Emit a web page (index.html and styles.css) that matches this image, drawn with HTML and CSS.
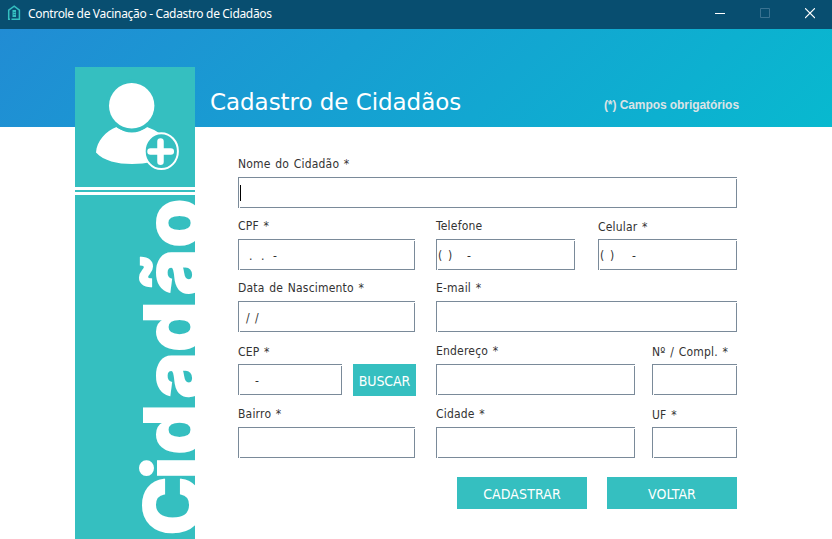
FILE: index.html
```html
<!DOCTYPE html>
<html lang="pt-BR">
<head>
<meta charset="utf-8">
<title>Controle de Vacinação - Cadastro de Cidadãos</title>
<link rel="stylesheet" href="styles.css">
</head>
<body>
<div class="window">
  <header class="titlebar">
    <svg class="app-icon" width="14" height="16" viewBox="0 0 14 16"><path d="M3 14.250H1.700V5.200L7.200 1.200l5.200 4v9.050H4.500" fill="none" stroke="#35bfc0" stroke-width="1.500"/><path d="M5.500 5h3.500v7H5.500z" fill="#35bfc0"/><path d="M6.500 7.500h2M6.500 9.500h2" stroke="#084e70" stroke-width=".6"/></svg>
    <span class="window-title">Controle de Vacinação - Cadastro de Cidadãos</span>
    <div class="controls">
      <svg width="10" height="11" viewBox="0 0 10 11"><path d="M0 5.500h10" stroke="#fff"/></svg>
      <svg width="10" height="11" viewBox="0 0 10 11"><path d="M.5.500h9v9h-9z" fill="none" stroke="#3a7291"/></svg>
      <svg width="10" height="11" viewBox="0 0 10 11"><path d="M0 .2l10 9.800M10 .2L0 10" stroke="#fff" stroke-width="1.200"/></svg>
    </div>
  </header>
  <div class="content">
    <aside class="side">
      <svg class="user" width="120" height="120" viewBox="0 0 120 120">
        <path d="M41.500 60C31 64 21.500 74 21 85.500C29 94 42 97 57 97S83 94 92 86L84 66Q78 62 72 60Q57 71 41.500 60Z" fill="#fff"/>
        <circle cx="56.700" cy="38.700" r="26.300" fill="#35bfc0"/>
        <circle cx="56.700" cy="38.700" r="22.700" fill="#fff"/>
        <ellipse cx="86.300" cy="84.200" rx="16.600" ry="17.900" fill="#35bfc0" stroke="#fff" stroke-width="2"/>
        <path d="M75.500 84.500h20.300M85.500 74.500v20.300" stroke="#fff" stroke-width="6.500" stroke-linecap="round"/>
      </svg>
      <div class="stripe"></div>
      <svg class="side-name" width="120" height="344" viewBox="0 0 120 344"><text class="vertical" transform="translate(126.300 341.600) rotate(-90)" x="1 57.300 82 138 184.800 241.400 289">Cidadão</text></svg>
    </aside>
    <main class="main">
      <div class="banner"><h1>Cadastro de Cidadãos</h1><span class="required">(*) Campos obrigatórios</span></div>
      <form class="form">
        <div class="row"><div class="group w-full"><label>Nome do Cidadão *</label><div class="field"><i class="caret"></i></div></div></div>
        <div class="row">
          <div class="group w-left"><label>CPF *</label><div class="field cpf"><span>.</span><span>.</span><span>-</span></div></div>
          <div class="group w-phone"><label>Telefone</label><div class="field phone"><span>(</span><span>)</span><span>-</span></div></div>
          <div class="group w-phone cell"><label class="low">Celular *</label><div class="field phone"><span>(</span><span>)</span><span>-</span></div></div>
        </div>
        <div class="row">
          <div class="group w-left"><label>Data de Nascimento *</label><div class="field date"><span>/</span><span>/</span></div></div>
          <div class="group w-mail"><label>E-mail *</label><div class="field"></div></div>
        </div>
        <div class="row spaced">
          <div class="group w-cep"><label class="low">CEP *</label><div class="field cep"><span>-</span></div></div>
          <button type="button" class="search">BUSCAR</button>
          <div class="group w-addr"><label>Endereço *</label><div class="field"></div></div>
          <div class="group w-small"><label class="low">Nº / Compl. *</label><div class="field"></div></div>
        </div>
        <div class="row spaced">
          <div class="group w-left"><label>Bairro *</label><div class="field"></div></div>
          <div class="group w-addr city"><label>Cidade *</label><div class="field"></div></div>
          <div class="group w-small"><label class="low">UF *</label><div class="field"></div></div>
        </div>
        <div class="actions"><button type="button">CADASTRAR</button><button type="button">VOLTAR</button></div>
      </form>
    </main>
  </div>
</div>
</body>
</html>
```
FILE: styles.css
```css
* { box-sizing: border-box; }
body { margin: 0; background: #fff; }
.window { width: 832px; height: 539px; overflow: hidden; }
.titlebar { height: 29px; background: #084e70; display: flex; align-items: center; padding: 0 17px 3px 7px; color: #fff; }
.window-title { margin-left: 7px; padding-top: 1px; font: 12px/16px "Noto Sans", sans-serif; letter-spacing: -0.33px; }
.controls { margin-left: auto; display: flex; gap: 35px; }
.content {
  height: 510px;
  padding-left: 75px;
  display: flex;
  background: linear-gradient(135deg, #218cd4 0%, #08b9cf 100%) 0 0 / 100% 98px no-repeat;
}
.side { width: 120px; margin-top: 38px; flex: none; }
.side svg { display: block; background: #35bfc0; overflow: hidden; }
.stripe { height: 8px; background: #35bfc0; border-top: 3px solid #fff; border-bottom: 3px solid #fff; }
.vertical { font: 800 79px "Inter", sans-serif; fill: #fff; stroke: #fff; stroke-width: 2px; }
.main { width: 544px; }
.banner { height: 98px; display: flex; justify-content: space-between; padding-left: 15px; color: #fff; }
h1 { margin: 58px 0 0; font: 23px/30px "DejaVu Sans", sans-serif; letter-spacing: -0.05px; }
.required { margin-top: 68px; font: bold 12px/16px "Liberation Sans", sans-serif; letter-spacing: -0.07px; color: #dce3e6; }
.form { width: 542px; padding: 24px 0 0 43px; font: 12px/24px "DejaVu Sans Condensed", "DejaVu Sans", sans-serif; font-stretch: condensed; color: #333; }
.row { display: flex; height: 57px; margin-bottom: 5px; align-items: flex-end; }
.row.spaced { margin-top: 6px; }
label { display: block; height: 26px; padding-top: 1px; white-space: nowrap; letter-spacing: 0.2px; word-spacing: 1px; }
label.low { padding-top: 2px; }
.w-full { width: 499px; }
.w-left { width: 177px; margin-right: 21px; }
.w-phone { width: 139px; }
.cell { margin-left: 23px; }
.w-mail { width: 301px; }
.w-cep { width: 104px; }
.w-addr { width: 199px; margin: 0 17px 0 20px; }
.w-addr.city { margin-left: 0; }
.w-small { width: 85px; }
.field {
  height: 31px;
  display: flex;
  align-items: center;
  padding: 3px 2px 0;
  background:
    linear-gradient(#7a8a99, #7a8a99) 0 0 / 100% 1px no-repeat,
    linear-gradient(#7a8a99, #7a8a99) 0 0 / 1px 100% no-repeat,
    linear-gradient(#7a8a99, #7a8a99) 100% 100% / calc(100% - 2px) 1px no-repeat,
    linear-gradient(#7a8a99, #7a8a99) 100% 100% / 1px calc(100% - 2px) no-repeat;
}
.caret { width: 1px; height: 16px; margin-top: -2px; background: #000; }
.cpf { padding-left: 11px; }
.cpf span { width: 12px; }
.phone span { width: 10px; }
.phone span:nth-child(2) { width: 19px; }
.cell .phone span:nth-child(2) { width: 22px; }
.date { padding-left: 8px; }
.date span { width: 9px; }
.cep { padding-left: 17px; }
button { border: 0; padding: 2px 0 0; background: #35bfc0; color: #fff; font: 14px/30px "DejaVu Sans Condensed", "DejaVu Sans", sans-serif; font-stretch: condensed; letter-spacing: -0.1px; height: 32px; }
.search { width: 63px; margin: 0 0 -1px 11px; }
.actions { display: flex; justify-content: flex-end; gap: 20px; margin-top: 19px; }
.actions button { width: 130px; letter-spacing: 0.1px; }
```
